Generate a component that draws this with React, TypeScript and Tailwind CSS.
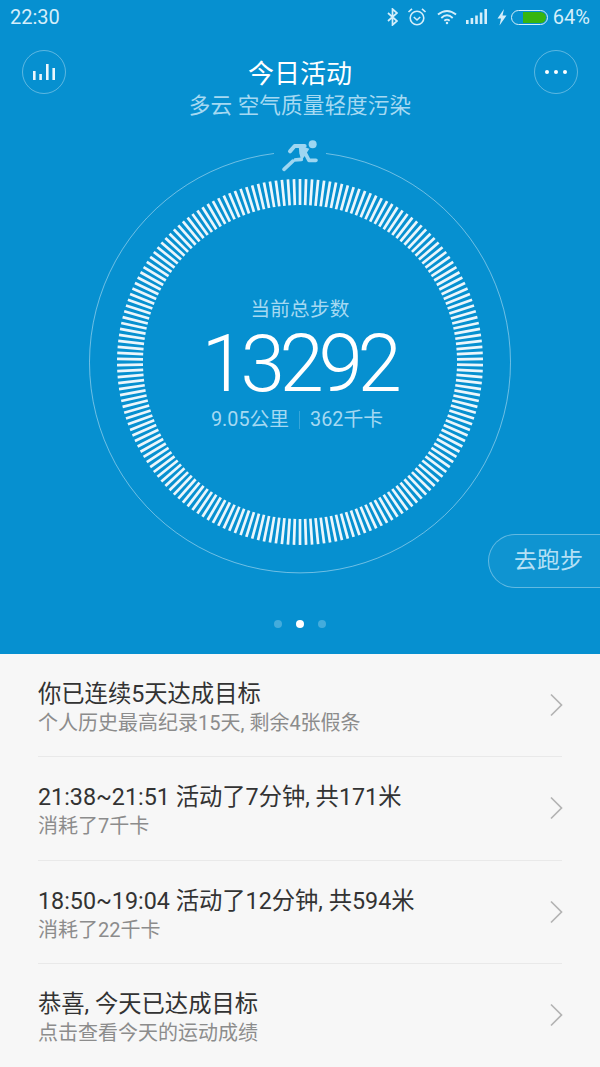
import React from "react";

const FONT = "font-['Roboto','Noto_Sans_CJK_SC',sans-serif]";

function Ring() {
  const ticks = [];
  const n = 190;
  for (let i = 0; i < n; i++) {
    const a = (i / n) * Math.PI * 2;
    const s = Math.sin(a);
    const c = Math.cos(a);
    ticks.push(
      <line
        key={i}
        x1={+(230 + 157 * s).toFixed(2)}
        y1={+(230 - 157 * c).toFixed(2)}
        x2={+(230 + 183 * s).toFixed(2)}
        y2={+(230 - 183 * c).toFixed(2)}
        stroke="#ffffff"
        strokeWidth="2.7"
        opacity="0.92"
      />
    );
  }
  return (
    <svg width="460" height="460" viewBox="0 0 460 460" fill="none" className="block">
      <path
        d="M 256 21.5 A 210.5 210.5 0 1 1 204 21.5"
        stroke="#ffffff"
        strokeOpacity="0.42"
        strokeWidth="1"
      />
      {ticks}
      {/* runner: coordinates taken at 3x */}
      <g transform="translate(160 -2) scale(0.3333)" fill="#9ed6f1" stroke="#9ed6f1">
        <circle cx="248" cy="43" r="12" stroke="none" />
        <path d="M180 64 L194 48 L224 48" strokeWidth="12" strokeLinejoin="round" strokeLinecap="round" fill="none" />
        <path d="M206 46 L238 56 L226 76 L214 92 L208 70 Z" stroke="none" />
        <path d="M226 70 L237 91 L258 91" strokeWidth="11" strokeLinejoin="round" strokeLinecap="round" fill="none" />
        <path d="M214 88 L192 90 L162 118" strokeWidth="11" strokeLinejoin="round" strokeLinecap="round" fill="none" />
        <path d="M188 88 L204 66" strokeWidth="4" stroke="#0690d0" fill="none" />
      </g>
    </svg>
  );
}

function Row({ title, sub }: { title: string; sub: string }) {
  return (
    <div className="flex h-[103.5px] shrink-0 items-center border-b border-[#e9e9e9]">
      <div className="flex-1 pt-[6px]">
        <div className="text-[23.3px] leading-[30px] text-[#333333]">{title}</div>
        <div className="mt-[1px] text-[20px] leading-[27px] text-[#8c8c8c]">{sub}</div>
      </div>
      <svg width="14" height="26" viewBox="0 0 14 26" fill="none" className="mr-[-1px]">
        <path d="M2 2.5 L12.5 13 L2 23.5" stroke="#b3b3b3" strokeWidth="1.7" />
      </svg>
    </div>
  );
}

export default function App() {
  return (
    <div className={`flex h-[1067px] w-[600px] flex-col overflow-hidden bg-[#f7f7f7] ${FONT}`}>
      <div className="relative h-[653.5px] shrink-0 bg-[#0690d0] text-white">
        {/* status bar */}
        <div className="flex h-[34px] items-center justify-between px-[10px] text-[#d4eefa]">
          <span className="text-[20px] leading-none">22:30</span>
          <div className="flex items-center">
            <svg width="11" height="18" viewBox="0 0 11 18" fill="none" stroke="#d4eefa" strokeWidth="1.7">
              <path d="M1 5 L10 13 L5.5 17 V1 L10 5 L1 13" />
            </svg>
            <svg width="20" height="20" viewBox="0 0 20 20" fill="none" stroke="#d4eefa" strokeWidth="1.6" className="ml-[9px]">
              <circle cx="10" cy="11" r="6.8" />
              <path d="M6.8 10 L10 13 L13.2 10" />
              <path d="M1.5 5 L5 1.8 M18.5 5 L15 1.8" />
            </svg>
            <svg width="20" height="16" viewBox="0 0 21 16" fill="none" stroke="#d4eefa" strokeWidth="2" className="ml-[10px]">
              <path d="M1 5.5 Q10.5 -2 20 5.5" />
              <path d="M4.5 9 Q10.5 3.5 16.5 9" />
              <path d="M7.7 12 Q10.5 9.5 13.3 12" />
              <circle cx="10.5" cy="14.3" r="1.3" fill="#d4eefa" stroke="none" />
            </svg>
            <svg width="22" height="16" viewBox="0 0 22 16" fill="#d4eefa" className="ml-[9px]">
              <rect x="0" y="11" width="2.6" height="4" />
              <rect x="4.6" y="9" width="2.6" height="6" />
              <rect x="9.2" y="6.5" width="2.6" height="8.5" />
              <rect x="13.8" y="3.5" width="2.6" height="11.5" />
              <rect x="18.4" y="0" width="2.6" height="15" />
            </svg>
            <svg width="10" height="17" viewBox="0 0 10 17" fill="#d4eefa" className="ml-[9px]">
              <path d="M7 0 L0.5 9.5 H4 L2.5 16.5 L9.5 6.5 H5.5 Z" />
            </svg>
            <div className="ml-[4px] flex h-[15px] w-[37px] justify-end rounded-full border border-[#d4eefa] p-[1px]">
              <div className="mr-[-0.5px] h-full w-[23px] rounded-r-full bg-[#37b50f]" />
            </div>
            <span className="ml-[5px] text-[20px] leading-none">64%</span>
          </div>
        </div>

        {/* header */}
        <div className="flex items-start justify-between px-[22px] pt-[16px]">
          <div className="flex h-[44px] w-[44px] items-center justify-center rounded-full border border-white/35">
            <svg width="22" height="16" viewBox="0 0 22 16" fill="#ffffff" fillOpacity="0.92">
              <rect x="0" y="7" width="2.6" height="9" />
              <rect x="6.3" y="10" width="2.6" height="6" />
              <rect x="13" y="0" width="2.6" height="16" />
              <rect x="19.4" y="4" width="2.6" height="12" />
            </svg>
          </div>
          <div className="pt-[7px] text-center">
            <div className="text-[26px] leading-[34px] text-white">今日活动</div>
            <div className="text-[21.6px] leading-[30px] tracking-[0.1px] text-[#a5d9f2]">多云 空气质量轻度污染</div>
          </div>
          <div className="flex h-[44px] w-[44px] items-center justify-center gap-[5px] rounded-full border border-white/35">
            <span className="h-[4px] w-[4px] rounded-full bg-white" />
            <span className="h-[4px] w-[4px] rounded-full bg-white" />
            <span className="h-[4px] w-[4px] rounded-full bg-white" />
          </div>
        </div>

        {/* ring */}
        <div className="relative ml-[70px] mt-[11px] h-[460px] w-[460px]">
          <Ring />
          <div className="absolute inset-0 flex flex-col items-center pt-[165px]">
            <div className="text-[19.6px] leading-[26px] tracking-[0.2px] text-[#a5d9f2]">当前总步数</div>
            <div className="mt-[6px] pr-[2px] font-['Roboto',sans-serif] text-[80px] font-light leading-[70px] tracking-[-5.4px] text-white">13292</div>
            <div className="mt-[8px] flex items-center pr-[6px] text-[19.8px] leading-[26px] text-[#a5d9f2]">
              <span>9.05公里</span>
              <span className="mx-[10px] h-[18px] w-[1px] bg-white/20" />
              <span>362千卡</span>
            </div>
          </div>
        </div>

        {/* go run */}
        <div className="absolute right-0 top-[534px] flex h-[54px] w-[112px] items-center rounded-l-[27px] border border-r-0 border-white/35 bg-white/[0.04] pl-[25px] text-[23px] text-[#b5e0f5]">
          去跑步
        </div>

        {/* dots */}
        <div className="absolute left-0 right-0 top-[620px] flex items-center justify-center gap-[14px]">
          <span className="h-[8px] w-[8px] rounded-full bg-white/25" />
          <span className="h-[8px] w-[8px] rounded-full bg-white" />
          <span className="h-[8px] w-[8px] rounded-full bg-white/25" />
        </div>
      </div>

      <div className="flex flex-col px-[38px]">
        <Row title="你已连续5天达成目标" sub="个人历史最高纪录15天, 剩余4张假条" />
        <Row title="21:38~21:51 活动了7分钟, 共171米" sub="消耗了7千卡" />
        <Row title="18:50~19:04 活动了12分钟, 共594米" sub="消耗了22千卡" />
        <Row title="恭喜, 今天已达成目标" sub="点击查看今天的运动成绩" />
      </div>
    </div>
  );
}
